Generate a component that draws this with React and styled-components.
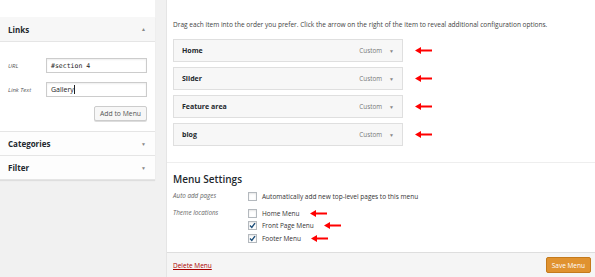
import React from 'react';
import styled, { createGlobalStyle } from 'styled-components';

const GlobalStyle = createGlobalStyle`
  body {
    margin: 0;
    background: #f1f1f1;
    font-family: "Open Sans", "Liberation Sans", sans-serif;
    color: #444;
  }
`;

const Page = styled.div`
  display: flex;
  width: 595px;
  height: 277px;
  overflow: hidden;
`;

const Side = styled.div`
  width: 155px;
  flex-shrink: 0;
  padding-top: 17px;
  background: linear-gradient(#fff 0 17px, transparent 17px);
`;

const Panel = styled.div`
  background: #fff;
  box-shadow: 0 1px 1px rgba(0, 0, 0, 0.08);
`;

const SectionHead = styled.div`
  height: ${p => p.$h}px;
  display: flex;
  align-items: center;
  justify-content: space-between;
  padding: 0 9px 0 8px;
  font-size: 8px;
  font-weight: 700;
  color: #23282d;
  background: ${p => (p.$open ? '#f7f7f7' : '#fdfdfd')};
  border-bottom: 1px solid #e5e5e5;
`;

const Caret = styled.span`
  font-size: 5px;
  color: #888;
  font-weight: 400;
`;

const LinksBody = styled.div`
  padding: 16px 8px 10px;
  display: flex;
  flex-direction: column;
  gap: 9px;
  border-bottom: 1px solid #e5e5e5;
`;

const FieldRow = styled.div`
  display: flex;
  align-items: center;
`;

const FieldLabel = styled.span`
  width: 38px;
  font-size: 6px;
  font-style: italic;
  color: #555;
`;

const TextInput = styled.div`
  box-sizing: border-box;
  width: 101px;
  height: 15px;
  border: 1px solid #ccc;
  box-shadow: inset 0 1px 2px rgba(0, 0, 0, 0.07);
  padding: 0 4px;
  display: flex;
  align-items: center;
  font-size: ${p => (p.$mono ? '6.5px' : '7px')};
  font-family: ${p => (p.$mono ? '"DejaVu Sans Mono", monospace' : 'inherit')};
  color: #222;
`;

const Cursor = styled.span`
  display: inline-block;
  width: 1px;
  height: 9px;
  background: #222;
  margin-left: 0.5px;
`;

const SmallButton = styled.div`
  align-self: flex-end;
  height: 15px;
  box-sizing: border-box;
  padding: 0 5px;
  display: flex;
  align-items: center;
  border: 1px solid #ccc;
  border-radius: 2px;
  background: #f7f7f7;
  box-shadow: 0 1px 0 #ddd;
  font-size: 6.8px;
  color: #555;
`;

const Main = styled.div`
  flex: 1;
  margin-left: 11px;
  background: #fff;
  border-left: 1px solid #e5e5e5;
  display: flex;
  flex-direction: column;
`;

const Content = styled.div`
  padding-left: 6px;
`;

const Instructions = styled.p`
  margin: 0;
  padding-top: 20px;
  height: 19px;
  box-sizing: content-box;
  font-size: 6.55px;
  line-height: 9px;
  color: #444;
  white-space: nowrap;
`;

const ItemList = styled.div`
  display: flex;
  flex-direction: column;
  gap: 5px;
`;

const ItemRow = styled.div`
  display: flex;
  align-items: center;
  gap: 12px;
`;

const MenuItem = styled.div`
  box-sizing: border-box;
  width: 230px;
  height: 23px;
  border: 1px solid #dfdfdf;
  background: #f7f7f7;
  display: flex;
  align-items: center;
  padding: 0 8px;
`;

const ItemName = styled.span`
  flex: 1;
  font-size: 7px;
  font-weight: 700;
  color: #23282d;
`;

const ItemType = styled.span`
  font-size: 6.3px;
  color: #777;
  margin-right: 7px;
`;

const Divider = styled.div`
  margin-top: 16px;
  border-top: 1px solid #eee;
`;

const SettingsTitle = styled.h3`
  margin: 10px 0 5px;
  font-size: 10px;
  line-height: 12px;
  font-weight: 600;
  color: #23282d;
`;

const SettingRow = styled.div`
  display: grid;
  grid-template-columns: 75px 1fr;
  margin-bottom: ${p => p.$gap || 0}px;
`;

const SettingLabel = styled.span`
  font-size: 6.3px;
  font-style: italic;
  color: #666;
  line-height: 12px;
`;

const Options = styled.div`
  display: flex;
  flex-direction: column;
`;

const Option = styled.label`
  display: flex;
  align-items: center;
  height: ${p => p.$h || 12}px;
  font-size: 6.5px;
  color: #333;
`;

const Box = styled.span`
  box-sizing: border-box;
  width: 9px;
  height: 9px;
  border: 1px solid #b4b9be;
  background: #fff;
  box-shadow: inset 0 1px 2px rgba(0, 0, 0, 0.1);
  margin-right: 5px;
  display: flex;
  align-items: center;
  justify-content: center;
`;

const OptionText = styled.span`
  margin-right: 10px;
`;

const Footer = styled.div`
  margin-top: auto;
  height: 24px;
  border-top: 1px solid #dedede;
  background: #f5f5f5;
  display: flex;
  align-items: center;
  justify-content: space-between;
  padding: 0 4px 0 6px;
`;

const DeleteLink = styled.span`
  font-size: 6.5px;
  color: #a00;
  text-decoration: underline;
`;

const SaveButton = styled.div`
  height: 16px;
  box-sizing: border-box;
  padding: 0 5px;
  display: flex;
  align-items: center;
  background: #e0922f;
  border: 1px solid #c47a1c;
  border-radius: 2px;
  color: #fff;
  font-size: 6.5px;
`;

const RedArrow = () => (
  <svg width="17" height="7" viewBox="0 0 17 7">
    <polygon points="0,3.5 6,0 6,7" fill="#f00" />
    <rect x="5" y="2.5" width="12" height="2" fill="#f00" />
  </svg>
);

const Check = () => (
  <svg width="7" height="7" viewBox="0 0 7 7">
    <path d="M1 3.6 L2.8 5.4 L6 1.2" fill="none" stroke="#1e4f7a" strokeWidth="1.4" />
  </svg>
);

const Checkbox = ({ checked }) => <Box>{checked && <Check />}</Box>;

const items = ['Home', 'Slider', 'Feature area', 'blog'];

const locations = [
  { name: 'Home Menu', checked: false },
  { name: 'Front Page Menu', checked: true },
  { name: 'Footer Menu', checked: true }
];

const App = () => (
  <>
    <GlobalStyle />
    <Page>
      <Side>
        <Panel>
          <SectionHead $h={24} $open>
            Links <Caret>▲</Caret>
          </SectionHead>
          <LinksBody>
            <FieldRow>
              <FieldLabel>URL</FieldLabel>
              <TextInput $mono>#section 4</TextInput>
            </FieldRow>
            <FieldRow>
              <FieldLabel>Link Text</FieldLabel>
              <TextInput>
                Gallery
                <Cursor />
              </TextInput>
            </FieldRow>
            <SmallButton>Add to Menu</SmallButton>
          </LinksBody>
          <SectionHead $h={23}>
            Categories <Caret>▼</Caret>
          </SectionHead>
          <SectionHead $h={23}>
            Filter <Caret>▼</Caret>
          </SectionHead>
        </Panel>
      </Side>
      <Main>
        <Content>
          <Instructions>
            Drag each item into the order you prefer. Click the arrow on the right of the item to
            reveal additional configuration options.
          </Instructions>
          <ItemList>
            {items.map(name => (
              <ItemRow key={name}>
                <MenuItem>
                  <ItemName>{name}</ItemName>
                  <ItemType>Custom</ItemType>
                  <Caret>▼</Caret>
                </MenuItem>
                <RedArrow />
              </ItemRow>
            ))}
          </ItemList>
        </Content>
        <Divider />
        <Content>
          <SettingsTitle>Menu Settings</SettingsTitle>
          <SettingRow $gap={5}>
            <SettingLabel>Auto add pages</SettingLabel>
            <Options>
              <Option>
                <Checkbox />
                <OptionText>Automatically add new top-level pages to this menu</OptionText>
              </Option>
            </Options>
          </SettingRow>
          <SettingRow>
            <SettingLabel>Theme locations</SettingLabel>
            <Options>
              {locations.map(loc => (
                <Option key={loc.name} $h={12.5}>
                  <Checkbox checked={loc.checked} />
                  <OptionText>{loc.name}</OptionText>
                  <RedArrow />
                </Option>
              ))}
            </Options>
          </SettingRow>
        </Content>
        <Footer>
          <DeleteLink>Delete Menu</DeleteLink>
          <SaveButton>Save Menu</SaveButton>
        </Footer>
      </Main>
    </Page>
  </>
);

export default App;
